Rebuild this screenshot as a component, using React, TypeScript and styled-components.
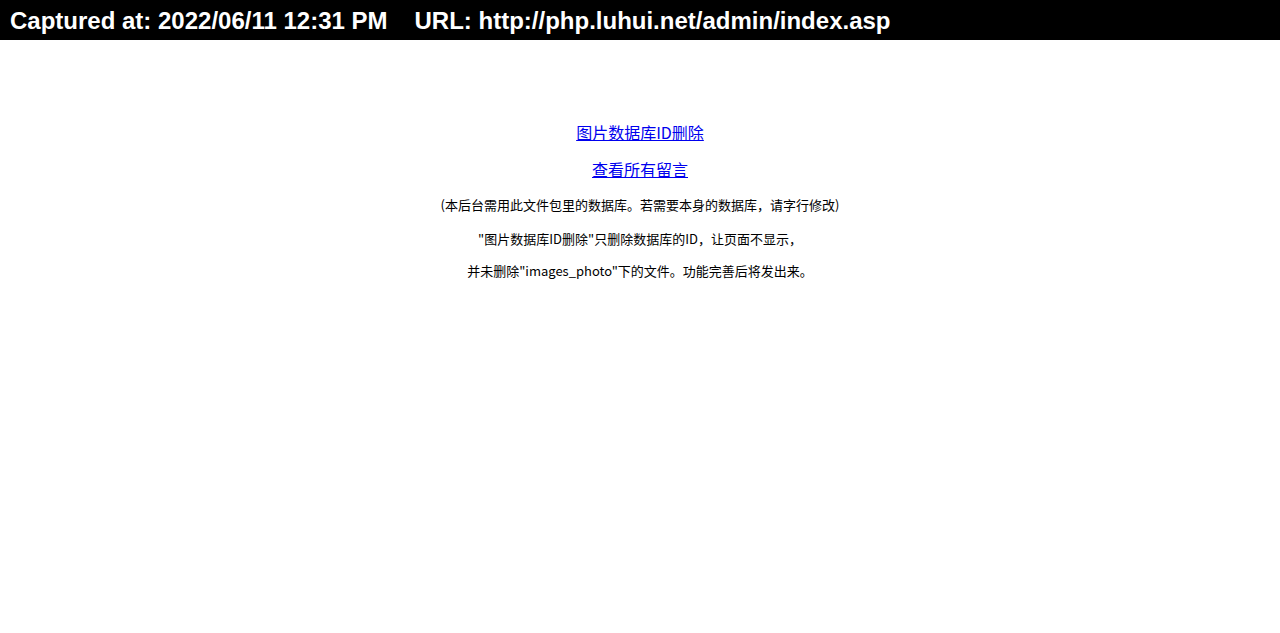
import React from "react";
import styled, { createGlobalStyle } from "styled-components";

const GlobalStyle = createGlobalStyle`
  html, body {
    margin: 0;
    padding: 0;
    background: #fff;
  }
  body {
    font-family: "Noto Sans CJK SC", "Noto Sans", sans-serif;
  }
`;

const CaptureBar = styled.div`
  height: 40px;
  box-sizing: border-box;
  background: #000;
  color: #fff;
  display: flex;
  align-items: center;
  gap: 27px;
  padding: 2px 10px 0;
  font-family: "Liberation Sans", Arial, sans-serif;
  font-weight: bold;
  font-size: 24px;
  white-space: nowrap;
`;

const Content = styled.div`
  display: flex;
  flex-direction: column;
  align-items: center;
  padding-top: 82px;
`;

const AdminLink = styled.a<{ $gap?: number }>`
  display: block;
  font-size: 16px;
  line-height: 20px;
  color: #0000ee;
  text-decoration: underline;
  margin-top: ${(p) => p.$gap ?? 0}px;
`;

const Note = styled.p<{ $gap: number }>`
  margin: ${(p) => p.$gap}px 0 0;
  font-size: 13px;
  line-height: 18px;
  color: #000;
  text-align: center;
`;

function App() {
  return (
    <>
      <GlobalStyle />
      <CaptureBar>
        <span>Captured at: 2022/06/11 12:31 PM</span>
        <span>URL: http://php.luhui.net/admin/index.asp</span>
      </CaptureBar>
      <Content>
        <AdminLink href="#">图片数据库ID删除</AdminLink>
        <AdminLink href="#" $gap={17}>
          查看所有留言
        </AdminLink>
        <Note $gap={17}>
          (本后台需用此文件包里的数据库。若需要本身的数据库，请字行修改)
        </Note>
        <Note $gap={16}>"图片数据库ID删除"只删除数据库的ID，让页面不显示，</Note>
        <Note $gap={14}>并未删除"images_photo"下的文件。功能完善后将发出来。</Note>
      </Content>
    </>
  );
}

export default App;
